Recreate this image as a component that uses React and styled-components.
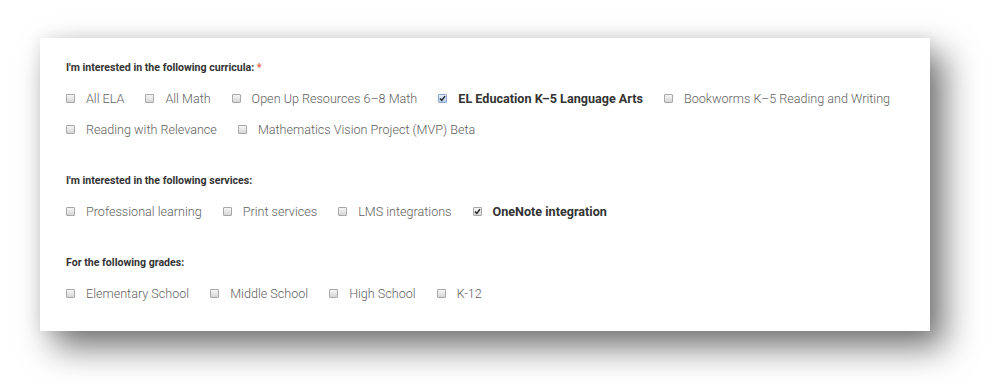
import React from 'react'
import styled, { createGlobalStyle } from 'styled-components'

const GlobalStyle = createGlobalStyle`
    body {
        margin: 0;
        background: #fff;
        font-family: Roboto, "Liberation Sans", sans-serif;
    }
`

const Page = styled.div`
    width: 999px;
    height: 385px;
    padding: 38px 0 0 40px;
    box-sizing: border-box;
    overflow: hidden;
`

const Card = styled.div`
    width: 890px;
    height: 293px;
    box-sizing: border-box;
    padding: 21px 26px 21px 26px;
    background: #fff;
    box-shadow: 14px 16px 32px rgba(0, 0, 0, 0.55), 0 0 14px rgba(0, 0, 0, 0.08);
`

const Section = styled.div`
    & + & {
        margin-top: 27px;
    }
`

const Heading = styled.div`
    font-size: 10.6px;
    font-weight: 700;
    line-height: 18px;
    color: #333;
    margin-bottom: 6px;

    span {
        color: #e8603c;
    }
`

const Options = styled.div`
    display: flex;
    flex-wrap: wrap;
    column-gap: 21px;
`

const Option = styled.label`
    display: flex;
    align-items: center;
    height: 31px;
    gap: 11px;
    font-size: 12.6px;
    font-weight: ${p => (p.checked ? 700 : 300)};
    color: ${p => (p.checked ? '#333' : '#5f5f5f')};
`

const Box = styled.span`
    position: relative;
    width: 7px;
    height: 7px;
    border: 1px solid ${p => (p.focused ? '#8aa6cc' : '#a8a8a8')};
    border-radius: 1px;
    background: ${p => (p.focused
        ? 'linear-gradient(#e2ecf8, #bcd0ea)'
        : 'linear-gradient(#f6f6f6, #d6d6d6)')};
    flex-shrink: 0;
`

const Tick = styled.svg`
    position: absolute;
    left: 0;
    top: 0;
`

const Checkbox = ({ checked, focused }) => (
    <Box focused={focused}>
        {checked &&
        <Tick width="7" height="7" viewBox="0 0 7 7">
            <path d="M1 3.6 L2.8 5.4 L6 1.2" fill="none" stroke="#222" strokeWidth="1.4" />
        </Tick>
        }
    </Box>
)

const sections = [
    {
        title: "I'm interested in the following curricula:",
        required: true,
        options: [
            { label: 'All ELA' },
            { label: 'All Math' },
            { label: 'Open Up Resources 6–8 Math' },
            { label: 'EL Education K–5 Language Arts', checked: true, focused: true },
            { label: 'Bookworms K–5 Reading and Writing' },
            { label: 'Reading with Relevance' },
            { label: 'Mathematics Vision Project (MVP) Beta' }
        ]
    },
    {
        title: "I'm interested in the following services:",
        options: [
            { label: 'Professional learning' },
            { label: 'Print services' },
            { label: 'LMS integrations' },
            { label: 'OneNote integration', checked: true }
        ]
    },
    {
        title: 'For the following grades:',
        options: [
            { label: 'Elementary School' },
            { label: 'Middle School' },
            { label: 'High School' },
            { label: 'K-12' }
        ]
    }
]

export default function App() {
    return (
        <Page>
            <GlobalStyle />
            <Card>
                {sections.map(section => (
                    <Section key={section.title}>
                        <Heading>
                            {section.title}
                            {section.required && <span> *</span>}
                        </Heading>
                        <Options>
                            {section.options.map(opt => (
                                <Option key={opt.label} checked={opt.checked}>
                                    <Checkbox checked={opt.checked} focused={opt.focused} />
                                    {opt.label}
                                </Option>
                            ))}
                        </Options>
                    </Section>
                ))}
            </Card>
        </Page>
    )
}
